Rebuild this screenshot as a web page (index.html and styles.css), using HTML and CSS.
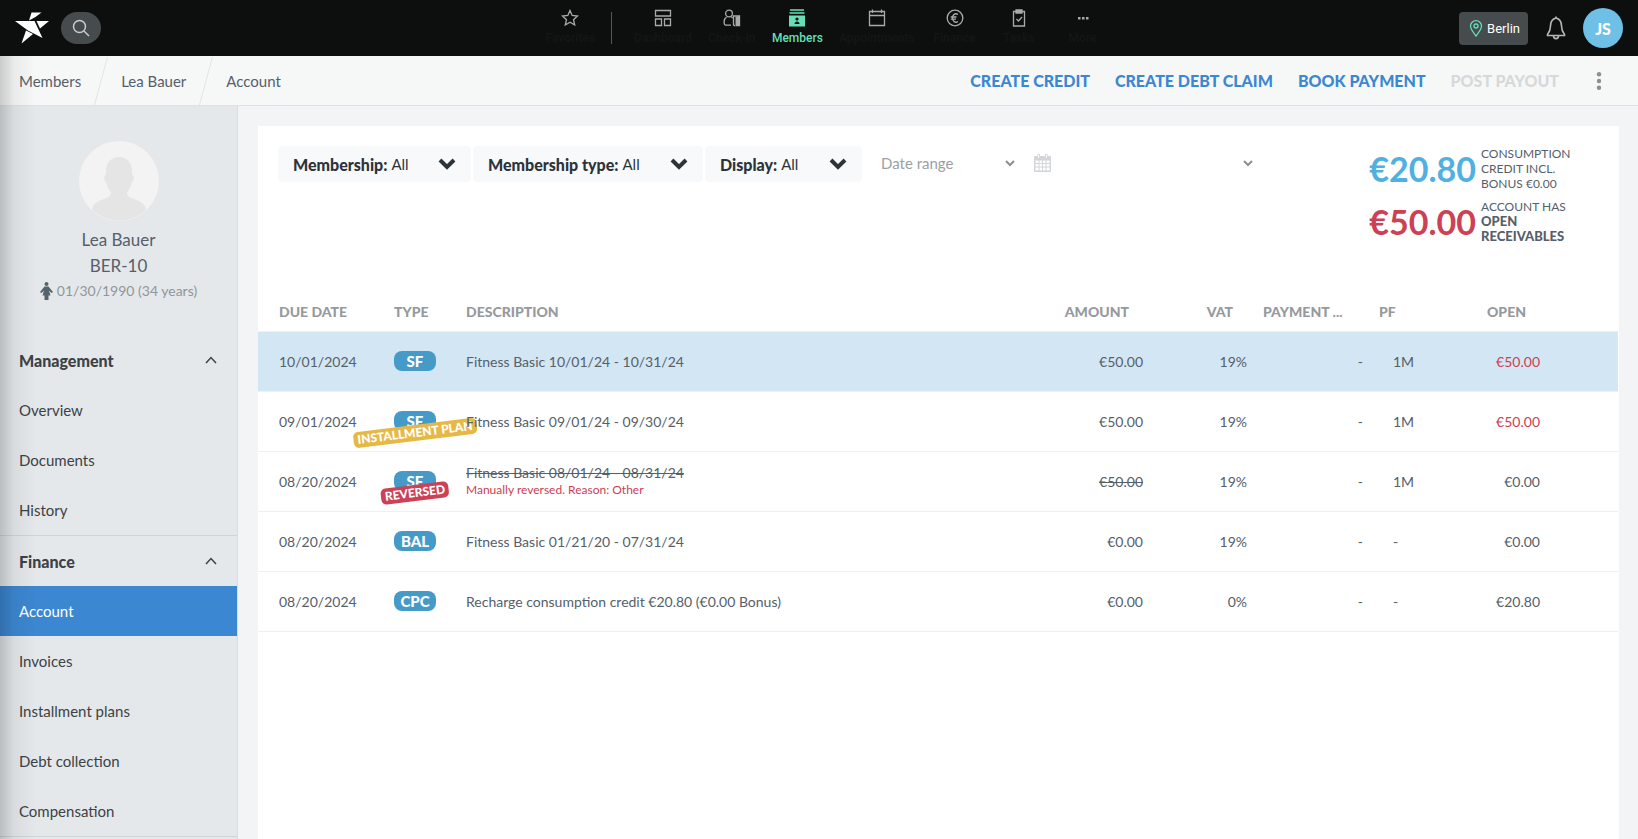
FILE: index.html
```html
<!DOCTYPE html>
<html lang="en">
<head>
    <meta charset="UTF-8">
    <meta name="viewport" content="width=device-width, initial-scale=1.0">
    <title>Account - Lea Bauer</title>
    <link rel="stylesheet" href="styles.css">
</head>
<body>
    <header class="topbar">
        <div class="topbar-left">
            <a href="#" class="logo" aria-label="Home">
                <svg width="34" height="32" viewBox="0 0 34 32" fill="#fff">
                    <path d="M16.5 0.5H26.5L20.5 5L14 8.5Z"/>
                    <path d="M0 9H19.5L27.5 26L13 18.5Z"/>
                    <path d="M21.5 9H34L25 16.5Z"/>
                    <path d="M11 18.5L18 22L6.5 31.5Z"/>
                </svg>
            </a>
            <button type="button" class="search" aria-label="Search">
                <svg width="18" height="18" viewBox="0 0 18 18" fill="none" stroke="#c9cccd" stroke-width="1.5">
                    <circle cx="7.5" cy="7.5" r="6"/>
                    <path d="M12 12L17 17"/>
                </svg>
            </button>
        </div>

        <nav class="main-nav">
            <a href="#" class="nav-item">
                <svg width="18" height="18" viewBox="0 0 18 18"><path d="M9 1.5L11.2 6.5L16.5 7L12.5 10.7L13.7 16L9 13.3L4.3 16L5.5 10.7L1.5 7L6.8 6.5Z"/></svg>
                <span>Favorites</span>
            </a>
            <span class="nav-separator"></span>
            <a href="#" class="nav-item">
                <svg width="18" height="18" viewBox="0 0 18 18"><path d="M1.5 1.5H16.5V7H1.5ZM1.5 10H7.5V16.5H1.5ZM10.5 10H16.5V16.5H10.5Z"/></svg>
                <span>Dashboard</span>
            </a>
            <a href="#" class="nav-item">
                <svg width="18" height="18" viewBox="0 0 18 18"><circle cx="6" cy="4.5" r="3.4"/><path d="M3.5 8C0.5 10 0.5 15.5 2.5 16.2H8M8.500 8L9.5 9M10.5 16.5V7H16.5V16.5H14.5M10.5 16.5H12"/><path class="fill" d="M12.5 8L17 6.5V16.5L12.5 17.5Z"/></svg>
                <span>Check-in</span>
            </a>
            <a href="#" class="nav-item active">
                <svg width="18" height="18" viewBox="0 0 18 18"><path d="M2 1H16M1.5 4H16.5"/><path class="fill" d="M1 6.5H17V17.5H1Z"/><circle class="cut" cx="9" cy="10" r="1.6"/><path class="cut" d="M6.5 15C6.5 11.5 11.5 11.5 11.5 15Z"/></svg>
                <span>Members</span>
            </a>
            <a href="#" class="nav-item">
                <svg width="18" height="18" viewBox="0 0 18 18"><path d="M1.5 2.5H16.5V16.5H1.5ZM1.5 6.5H16.5M4.5 0.5V4M13.5 0.5V4"/></svg>
                <span>Appointments</span>
            </a>
            <a href="#" class="nav-item">
                <svg width="18" height="18" viewBox="0 0 18 18"><circle cx="9" cy="9" r="7.8"/><path d="M12 5.5C9 3.5 6.5 6 6.5 9S9 14.5 12 12.5M4.8 8H10.5M4.8 10.2H10"/></svg>
                <span>Finance</span>
            </a>
            <a href="#" class="nav-item">
                <svg width="18" height="18" viewBox="0 0 18 18"><path d="M3.5 2.5H14.5V17H3.5ZM6 1H12V4H6ZM6.5 10L8.5 12L12 8"/></svg>
                <span>Tasks</span>
            </a>
            <a href="#" class="nav-item">
                <svg width="18" height="18" viewBox="0 0 18 18"><path class="fill" d="M4 8H6.5V10.5H4ZM8 8H10.5V10.5H8ZM12 8H14.5V10.5H12Z"/></svg>
                <span>More</span>
            </a>
        </nav>

        <div class="topbar-right">
            <button type="button" class="location">
                <svg width="14" height="17" viewBox="0 0 14 17" fill="none" stroke="#65dfb4" stroke-width="1.3"><path d="M7 16C4 12 1.5 9 1.5 6.2A5.5 5.5 0 0 1 12.5 6.2C12.5 9 10 12 7 16Z"/><circle cx="7" cy="6" r="2"/></svg>
                Berlin
            </button>
            <button type="button" class="bell" aria-label="Notifications">
                <svg width="20" height="24" viewBox="0 0 20 24" fill="none" stroke="#b5b7b7" stroke-width="1.6"><path d="M10 2C6 3 4.5 6 4.5 10C4.5 14 3.5 16 1.5 18.5V19.5H18.5V18.5C16.5 16 15.5 14 15.5 10C15.5 6 14 3 10 2ZM7.5 20C7.5 23.5 12.5 23.5 12.5 20M10 0.5V2"/></svg>
            </button>
            <button type="button" class="user">JS</button>
        </div>
    </header>

    <div class="subbar">
        <nav class="breadcrumb">
            <a href="#">Members</a>
            <svg class="slash" width="14" height="48" viewBox="0 0 14 48"><path d="M13.5 0L0.5 48"/></svg>
            <a href="#">Lea Bauer</a>
            <svg class="slash" width="14" height="48" viewBox="0 0 14 48"><path d="M13.5 0L0.5 48"/></svg>
            <a href="#">Account</a>
        </nav>
        <div class="actions">
            <button type="button">CREATE CREDIT</button>
            <button type="button">CREATE DEBT CLAIM</button>
            <button type="button">BOOK PAYMENT</button>
            <button type="button" disabled>POST PAYOUT</button>
            <button type="button" class="kebab" aria-label="More actions">
                <svg width="6" height="18" viewBox="0 0 6 18" fill="#8b8f92"><circle cx="3" cy="2.2" r="2.2"/><circle cx="3" cy="9" r="2.2"/><circle cx="3" cy="15.8" r="2.2"/></svg>
            </button>
        </div>
    </div>

    <div class="page">
        <aside class="sidebar">
            <div class="profile">
                <svg width="80" height="80" viewBox="0 0 80 80">
                    <circle cx="40" cy="40" r="40" fill="#f3f3f3"/>
                    <path d="M13 69C13 63 19 60 25 58C30 56 32 55 32 51C29 48 28 45 27.5 42C24 38 25 35 27 33C26 22 32 16 40 16S54 22 53 33C55 35 56 38 52.5 42C52 45 51 48 48 51C48 55 50 56 55 58C61 60 67 63 67 69A40 40 0 0 1 13 69Z" fill="#e5e5e5"/>
                </svg>
                <div class="name">Lea Bauer</div>
                <div class="name">BER-10</div>
                <div class="birthday">
                    <svg width="13" height="18" viewBox="0 0 13 18" fill="#55636b"><circle cx="6.5" cy="2" r="2"/><path d="M4.5 4.5H8.5L13 10L11.5 11L9 8.5L10.5 13.5H8.5V18H4.5V13.5H2.5L4 8.5L1.5 11L0 10Z"/></svg>
                    01/30/1990 (34 years)
                </div>
            </div>

            <div class="menu-group">
                <button type="button" class="menu-title">Management
                    <svg width="12" height="8" viewBox="0 0 12 8"><path d="M1 7L6 1.5L11 7"/></svg>
                </button>
                <a href="#">Overview</a>
                <a href="#">Documents</a>
                <a href="#">History</a>
            </div>
            <div class="menu-group">
                <button type="button" class="menu-title">Finance
                    <svg width="12" height="8" viewBox="0 0 12 8"><path d="M1 7L6 1.5L11 7"/></svg>
                </button>
                <a href="#" class="active">Account</a>
                <a href="#">Invoices</a>
                <a href="#">Installment plans</a>
                <a href="#">Debt collection</a>
                <a href="#">Compensation</a>
            </div>
        </aside>

        <main class="card">
            <div class="card-top">
                <div class="filters">
                    <label class="filter filter-membership">
                        <b>Membership:</b>
                        <select><option>All</option></select>
                        <svg class="chevron" width="18" height="12" viewBox="0 0 18 12"><path d="M2 2L9 9L16 2"/></svg>
                    </label>
                    <label class="filter filter-type">
                        <b>Membership type:</b>
                        <select><option>All</option></select>
                        <svg class="chevron" width="18" height="12" viewBox="0 0 18 12"><path d="M2 2L9 9L16 2"/></svg>
                    </label>
                    <label class="filter filter-display">
                        <b>Display:</b>
                        <select><option>All</option></select>
                        <svg class="chevron" width="18" height="12" viewBox="0 0 18 12"><path d="M2 2L9 9L16 2"/></svg>
                    </label>
                    <label class="date-filter">
                        <select aria-label="Date range"><option>Date range</option></select>
                        <svg class="chevron" width="10" height="7" viewBox="0 0 10 7"><path d="M1 1L5 5L9 1"/></svg>
                    </label>
                    <button type="button" class="calendar" aria-label="Pick dates">
                        <svg width="17" height="18" viewBox="0 0 17 18"><rect x="0" y="2" width="17" height="16" rx="1" fill="#d3d5d8"/><path d="M3.5 0H6V4H3.5ZM11 0H13.5V4H11Z" fill="#d3d5d8"/><path d="M4.7 1V4M12.3 1V4" stroke="#fff"/><path d="M1.5 6.5H4.5V9H1.5ZM5.5 6.5H8V9H5.5ZM9 6.5H11.5V9H9ZM12.5 6.5H15.5V9H12.5ZM1.5 10H4.5V12.5H1.5ZM5.5 10H8V12.5H5.5ZM9 10H11.5V12.5H9ZM12.5 10H15.5V12.5H12.5ZM1.5 13.5H4.5V16.5H1.5ZM5.5 13.5H8V16.5H5.5ZM9 13.5H11.5V16.5H9ZM12.5 13.5H15.5V16.5H12.5Z" fill="#fff"/></svg>
                    </button>
                    <label class="date-filter date-value">
                        <select aria-label="Date"><option></option></select>
                        <svg class="chevron" width="10" height="7" viewBox="0 0 10 7"><path d="M1 1L5 5L9 1"/></svg>
                    </label>
                </div>

                <div class="balances">
                    <div class="sum credit">€20.80</div>
                    <div class="sum-text">CONSUMPTION CREDIT INCL. BONUS €0.00</div>
                    <div class="sum debt">€50.00</div>
                    <div class="sum-text">ACCOUNT HAS <b>OPEN RECEIVABLES</b></div>
                </div>
            </div>

            <table class="bookings">
                <thead>
                    <tr>
                        <th class="col-date">DUE DATE</th>
                        <th class="col-type">TYPE</th>
                        <th>DESCRIPTION</th>
                        <th class="col-amount num">AMOUNT</th>
                        <th class="col-vat num">VAT</th>
                        <th class="col-payment">PAYMENT ...</th>
                        <th class="col-pf">PF</th>
                        <th class="col-open num">OPEN</th>
                        <th class="col-end"></th>
                    </tr>
                </thead>
                <tbody>
                    <tr class="selected">
                        <td class="col-date">10/01/2024</td>
                        <td><span class="badge">SF</span></td>
                        <td>Fitness Basic 10/01/24 - 10/31/24</td>
                        <td class="num">€50.00</td>
                        <td class="num">19%</td>
                        <td class="num">-</td>
                        <td class="pf">1M</td>
                        <td class="num red">€50.00</td>
                        <td></td>
                    </tr>
                    <tr>
                        <td class="col-date">09/01/2024</td>
                        <td><span class="badge">SF<span class="stamp stamp-plan">INSTALLMENT PLAN</span></span></td>
                        <td><span class="text">Fitness Basic 09/01/24 - 09/30/24</span></td>
                        <td class="num">€50.00</td>
                        <td class="num">19%</td>
                        <td class="num">-</td>
                        <td class="pf">1M</td>
                        <td class="num red">€50.00</td>
                        <td></td>
                    </tr>
                    <tr>
                        <td class="col-date">08/20/2024</td>
                        <td><span class="badge">SF<span class="stamp stamp-reversed">REVERSED</span></span></td>
                        <td><s>Fitness Basic 08/01/24 - 08/31/24</s><div class="note">Manually reversed. Reason: Other</div></td>
                        <td class="num"><s>€50.00</s></td>
                        <td class="num">19%</td>
                        <td class="num">-</td>
                        <td class="pf">1M</td>
                        <td class="num">€0.00</td>
                        <td></td>
                    </tr>
                    <tr>
                        <td class="col-date">08/20/2024</td>
                        <td><span class="badge">BAL</span></td>
                        <td>Fitness Basic 01/21/20 - 07/31/24</td>
                        <td class="num">€0.00</td>
                        <td class="num">19%</td>
                        <td class="num">-</td>
                        <td class="pf">-</td>
                        <td class="num">€0.00</td>
                        <td></td>
                    </tr>
                    <tr>
                        <td class="col-date">08/20/2024</td>
                        <td><span class="badge">CPC</span></td>
                        <td>Recharge consumption credit €20.80 (€0.00 Bonus)</td>
                        <td class="num">€0.00</td>
                        <td class="num">0%</td>
                        <td class="num">-</td>
                        <td class="pf">-</td>
                        <td class="num">€20.80</td>
                        <td></td>
                    </tr>
                </tbody>
            </table>
        </main>
    </div>
</body>
</html>
```

FILE: styles.css
```css
* {
    box-sizing: border-box;
}

body {
    margin: 0;
    height: 100vh;
    display: flex;
    flex-direction: column;
    overflow: hidden;
    background-color: #f3f4f6;
    color: #55606a;
    font-family: Lato, "Open Sans", sans-serif;
    font-size: 14px;
}

a {
    color: inherit;
    text-decoration: none;
}

button, select {
    padding: 0;
    border: none;
    background: none;
    color: inherit;
    font: inherit;
    cursor: pointer;
}

select {
    appearance: none;
}

svg {
    display: block;
    flex: none;
}

/* top bar */
.topbar {
    flex: none;
    height: 56px;
    padding: 0 15px;
    display: grid;
    grid-template-columns: 1fr auto 1fr;
    background-color: #0d0f0e;
    font-family: Roboto, sans-serif;
}

.topbar-left, .topbar-right {
    display: flex;
    align-items: center;
}

.topbar-left {
    gap: 12px;
}

.topbar-right {
    justify-content: flex-end;
}

.search {
    width: 40px;
    height: 32px;
    display: flex;
    align-items: center;
    justify-content: center;
    border-radius: 16px;
    background-color: #464b4e;
}

.main-nav {
    display: flex;
    gap: 16px;
    padding: 9px 0 0 14px;
}

.nav-item {
    min-width: 48px;
    display: flex;
    flex-direction: column;
    align-items: center;
    gap: 4px;
    color: #141615;
    font-size: 12px;
    font-weight: 500;
    line-height: 14px;
}

.nav-item svg {
    fill: none;
    stroke: #a9abab;
    stroke-width: 1.3;
}

.nav-item .fill {
    fill: #a9abab;
    stroke: none;
}

.nav-item.active {
    color: #65dfb4;
}

.nav-item.active svg {
    stroke: #65dfb4;
}

.nav-item.active .fill {
    fill: #65dfb4;
}

.nav-item .cut {
    fill: #0d0f0e;
    stroke: none;
}

.nav-separator {
    width: 1px;
    height: 32px;
    margin: 3px 6px 0 0;
    background-color: #555858;
}

.location {
    height: 33px;
    padding: 0 8px 0 10px;
    display: flex;
    align-items: center;
    gap: 4px;
    border-radius: 4px;
    background-color: #464b4e;
    color: #fff;
    font-size: 13px;
}

.bell {
    margin: 0 17px 0 18px;
}

.user {
    width: 40px;
    height: 40px;
    border-radius: 50%;
    background-color: #6ec0e6;
    color: #fff;
    font-family: Lato, sans-serif;
    font-size: 16px;
    font-weight: 900;
}

/* breadcrumb and actions */
.subbar {
    flex: none;
    height: 50px;
    padding: 0 29px 0 19px;
    display: flex;
    align-items: center;
    justify-content: space-between;
    border-bottom: 1px solid #dfe2e3;
    background-color: #f6f8f8;
}

.breadcrumb {
    display: flex;
    align-items: center;
    gap: 13px;
    font-size: 15px;
}

.slash {
    fill: none;
    stroke: #e1e4e6;
}

.actions {
    display: flex;
    align-items: center;
    gap: 25px;
    color: #3c87d1;
    font-size: 16px;
    font-weight: 900;
}

.actions button:disabled {
    color: #d6d8da;
}

.kebab {
    width: 20px;
    margin-left: 5px;
    display: flex;
    justify-content: center;
}

/* page */
.page {
    position: relative;
    flex: 1;
    min-height: 0;
    display: flex;
}

/* shadow on the left window edge */
.page::before {
    content: "";
    position: absolute;
    top: -50px;
    bottom: 0;
    left: 0;
    width: 36px;
    background: linear-gradient(to right, rgba(0, 0, 0, 0.18), rgba(0, 0, 0, 0.05) 40%, rgba(0, 0, 0, 0));
    pointer-events: none;
}

.sidebar {
    width: 238px;
    flex: none;
    overflow: hidden;
    border-right: 1px solid #d9dee0;
    background-color: #e4e8ea;
    color: #3c4245;
}

.profile {
    height: 229px;
    padding-top: 35px;
    display: flex;
    flex-direction: column;
    align-items: center;
    color: #55606a;
}

.name {
    font-size: 17px;
    line-height: 26px;
}

.profile svg + .name {
    margin-top: 6px;
}

.birthday {
    display: flex;
    align-items: center;
    gap: 4px;
    color: #90969a;
    font-size: 14px;
    line-height: 24px;
}

.menu-group {
    border-bottom: 1px solid #cdd5d8;
}

.menu-group a, .menu-title {
    width: 100%;
    height: 50px;
    padding: 0 20px 0 19px;
    display: flex;
    align-items: center;
    justify-content: space-between;
    font-size: 15px;
}

.menu-group .menu-title {
    font-size: 16px;
    font-weight: 900;
}

.menu-title svg {
    fill: none;
    stroke: #3c4245;
    stroke-width: 1.5;
}

.menu-group .active {
    background-color: #3c87d1;
    color: #fff;
}

.card {
    flex: 1;
    margin: 20px 19px 0 20px;
    background-color: #fff;
}

.card-top {
    height: 163px;
    padding: 20px 46px 0 20px;
    display: flex;
    justify-content: space-between;
}

.filters {
    display: flex;
    gap: 2px;
}

.filter {
    height: 36px;
    padding: 0 15px;
    display: flex;
    align-items: center;
    gap: 4px;
    border-radius: 4px;
    background-color: #f8f9fb;
    color: #2c343a;
    font-size: 15px;
}

.filter b {
    font-size: 16px;
    font-weight: 900;
}

.filter select {
    flex: 1;
    min-width: 0;
}

.filter-membership {
    width: 193px;
}

.filter-type {
    width: 230px;
}

.filter-display {
    width: 157px;
}

.chevron {
    fill: none;
    stroke: #8b8f95;
    stroke-width: 2;
}

.filter .chevron {
    stroke: #2c343a;
    stroke-width: 4;
}

.date-filter {
    width: 151px;
    height: 34px;
    padding-left: 17px;
    display: flex;
    align-items: center;
    color: #9da0a3;
    font-size: 15px;
}

.date-filter select {
    flex: 1;
}

.date-value {
    width: 200px;
}

.calendar {
    height: 34px;
    margin-left: 17px;
}

.balances {
    width: 203px;
    display: grid;
    grid-template-columns: auto 92px;
    column-gap: 5px;
    row-gap: 8px;
    align-content: start;
    align-items: center;
    justify-content: end;
}

.sum {
    font-size: 34px;
    font-weight: 700;
    line-height: 36px;
    text-align: right;
}

.credit {
    color: #50b0e0;
}

.debt {
    color: #cd4055;
}

.sum-text {
    font-size: 12px;
    line-height: 15px;
}

.sum-text b {
    font-size: 13px;
    font-weight: 900;
}

/* bookings table */
.bookings {
    width: calc(100% - 1px);
    table-layout: fixed;
    border-collapse: collapse;
}

.bookings th, .bookings td {
    padding: 0 8px;
    text-align: left;
    border-bottom: 1px solid #eff0f2;
}

.bookings th {
    height: 42px;
    padding-top: 3px;
    color: #96999d;
    font-size: 14px;
    font-weight: 900;
    white-space: nowrap;
}

.bookings td {
    height: 60px;
    font-size: 14px;
}

.bookings .col-date {
    width: 128px;
    padding-left: 21px;
}

.col-type {
    width: 72px;
}

.col-amount {
    width: 100px;
}

.col-vat {
    width: 104px;
}

.col-payment {
    width: 116px;
}

.col-pf {
    width: 97px;
}

.col-open {
    width: 80px;
}

.col-end {
    width: 70px;
}

.bookings .num {
    text-align: right;
}

.bookings th.num {
    padding-right: 22px;
}

.bookings .pf {
    padding-left: 22px;
}

.bookings .red {
    color: #cd4055;
}

.selected {
    background-color: #d3e6f3;
}

.note {
    color: #cd4055;
    font-size: 12px;
    line-height: 18px;
}

.badge {
    position: relative;
    width: 42px;
    height: 20px;
    display: flex;
    align-items: center;
    justify-content: center;
    border-radius: 8px;
    background-color: #459ac8;
    color: #fff;
    font-size: 15px;
    font-weight: 900;
}

/* rotated label lying over the badge */
.stamp {
    position: absolute;
    top: 14px;
    left: 50%;
    padding: 0 4px;
    border-radius: 5px;
    font-size: 12px;
    line-height: 16px;
    white-space: nowrap;
    transform: translateX(-50%) rotate(-7deg);
}

.stamp-plan {
    background-color: #e6b947;
}

.stamp-reversed {
    background-color: #cd4055;
}

.text {
    position: relative;
}
```
